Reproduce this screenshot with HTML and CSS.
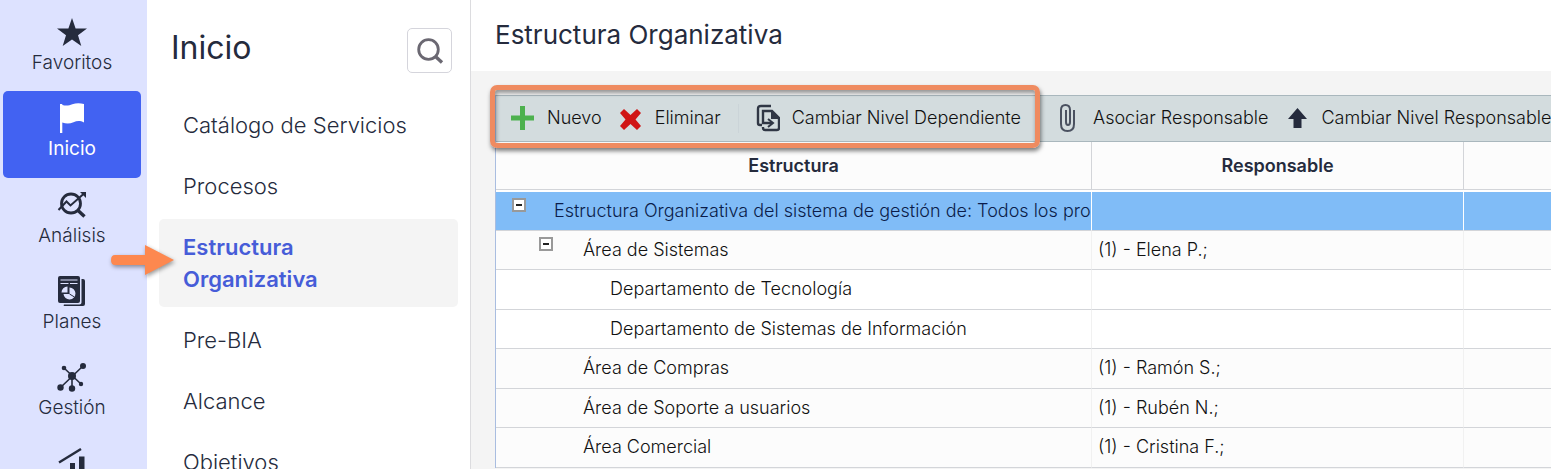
FILE: index.html
```html
<!DOCTYPE html>
<html lang="es">
<head>
  <meta charset="UTF-8">
  <meta name="viewport" content="width=device-width, initial-scale=1">
  <title>Estructura Organizativa</title>
  <link rel="stylesheet" href="styles.css">
</head>
<body>
  <div class="app">
    <nav class="rail">
      <a href="#" class="rail-item">
        <svg width="30" height="30" viewBox="0 0 30 30"><path fill="currentColor" d="M15 1l3.600 10.500H30l-9 6.700L24.300 29 15 22.500 5.700 29 9 18.200l-9-6.700h11.400z"/></svg>
        Favoritos
      </a>
      <a href="#" class="rail-item active">
        <svg width="30" height="30" viewBox="0 0 30 30"><path fill="currentColor" d="M3 1h2.300v1c4 1 7 .500 10-.7C19-.200 23-.200 27 1v18.500c-4-2.200-7-1.800-10.500-.3-4 1.700-7.500 1.500-11.200.3V30H3z"/></svg>
        Inicio
      </a>
      <a href="#" class="rail-item">
        <svg width="30" height="30" viewBox="0 0 30 30" fill="none" stroke="currentColor">
          <circle cx="14" cy="13.500" r="9.500" stroke-width="2.800"/>
          <path d="M1.500 20l8-8.500 4 4L26.500 4" stroke-width="2"/>
          <path d="M20.500 20l7 6.500" stroke-width="3.400"/>
          <path d="M23 2h6v6z" fill="currentColor" stroke="none"/>
        </svg>
        Análisis
      </a>
      <a href="#" class="rail-item">
        <svg width="30" height="30" viewBox="0 0 30 30">
          <path fill="currentColor" d="M3 0h18a2 2 0 0 1 2 2v23a2 2 0 0 1-2 2H3a2 2 0 0 1-2-2V2a2 2 0 0 1 2-2zM24.500 3H26a2 2 0 0 1 2 2v23a2 2 0 0 1-2 2H7a1 1 0 0 1 0-1.500h15.500a2 2 0 0 0 2-2z"/>
          <path stroke="#dde2ff" stroke-width="1.200" d="M3.500 4h17M3.500 7.500h8M13 7.500h7.500"/>
          <path fill="#dde2ff" d="M12.500 11.500a6 6 0 1 1-6 6.500h6zM10.500 10.500v6h-6a6 6 0 0 1 6-6z"/>
          <path fill="none" stroke="#252b3d" d="M12.500 18l5 3"/>
        </svg>
        Planes
      </a>
      <a href="#" class="rail-item">
        <svg width="30" height="30" viewBox="0 0 30 30" fill="currentColor">
          <path stroke="currentColor" stroke-width="1.600" d="M3 26L26 4M7 6l17 16M15 14v12"/>
          <circle cx="15" cy="14" r="4"/><circle cx="26" cy="4" r="3"/><circle cx="7" cy="6" r="2.300"/>
          <circle cx="3.500" cy="25.500" r="3.200"/><circle cx="15" cy="26.500" r="3.200"/><circle cx="24" cy="22" r="2.200"/>
        </svg>
        Gestión
      </a>
      <a href="#" class="rail-item" aria-label="Indicadores">
        <svg width="30" height="30" viewBox="0 0 30 30" fill="currentColor">
          <path stroke="currentColor" stroke-width="2.400" d="M2 14.500L24 1"/>
          <path d="M13 15h5v15h-5zM22 8.500h5.500V30H22zM4 22h5v8H4z"/>
        </svg>
      </a>
    </nav>

    <aside class="panel">
      <div class="panel-head">
        <h1>Inicio</h1>
        <button class="search" aria-label="Buscar">
          <svg width="28" height="28" viewBox="0 0 28 28" fill="none" stroke="currentColor" stroke-width="2.800"><circle cx="12.500" cy="12.500" r="9.800"/><path d="M19.500 19.500l6.500 6" stroke-width="3.400"/></svg>
        </button>
      </div>
      <nav class="menu">
        <a href="#">Catálogo de Servicios</a>
        <a href="#">Procesos</a>
        <a href="#" class="selected">
          Estructura<br>Organizativa
          <svg class="arrow" width="68" height="36" viewBox="0 0 68 36"><path fill="#fd884f" d="M6 12h30V2l29 15-29 15V22H6q-4 0-4-5t4-5z"/></svg>
        </a>
        <a href="#">Pre-BIA</a>
        <a href="#">Alcance</a>
        <a href="#">Objetivos</a>
      </nav>
    </aside>

    <main class="main">
      <header class="topbar"><h2>Estructura Organizativa</h2></header>
      <section class="grid">
        <div class="toolbar">
          <div class="tool-group">
            <button class="tool">
              <svg width="24" height="24" viewBox="0 0 24 24"><path fill="#4db14e" d="M9 0h5v9.500h9v5h-9V24H9v-9.500H0v-5h9z"/></svg>
              Nuevo
            </button>
            <button class="tool">
              <svg width="24" height="24" viewBox="0 0 24 24"><path fill="#d01515" d="M5 3l6.500 6L18 3l4 4-5.500 6.500L22 20l-4 4-6.500-6L5 24l-4-4 5.500-6.500L1 7z"/></svg>
              Eliminar
            </button>
            <span class="separator"></span>
            <button class="tool">
              <svg width="24" height="28" viewBox="0 0 24 28" fill="none" stroke="#303745" stroke-width="2.400">
                <path d="M15 2H5Q2 2 2 5v14q0 2 2 2h2"/>
                <path d="M7 13V7h9l7 7v10q0 2-2 2H9q-2 0-2-2v-1M7 12v7h9"/>
                <path d="M12 15l5 4-5 4" stroke-width="2"/>
                <path d="M15 6l9 9h-9z" fill="#303745" stroke="none"/>
              </svg>
              Cambiar Nivel Dependiente
            </button>
            <span class="callout"></span>
          </div>
          <button class="tool">
            <svg width="24" height="28" viewBox="0 0 24 28" fill="none" stroke="#4a5160" stroke-width="2"><path d="M17 6v14q0 7-6.500 7T4 20V6q0-5 4.500-5T13 6v12q0 3-2 3t-2-3V6M17 6v13"/></svg>
            Asociar Responsable
          </button>
          <button class="tool">
            <svg width="24" height="22" viewBox="0 0 24 22"><path fill="#252b3d" d="M12.500 1L22 12h-5.500v9h-8v-9H3z"/></svg>
            Cambiar Nivel Responsable
          </button>
        </div>
        <table>
          <colgroup><col class="col-name"><col class="col-resp"><col></colgroup>
          <thead>
            <tr><th>Estructura</th><th>Responsable</th><th></th></tr>
          </thead>
          <tbody>
            <tr class="current"><td class="level-0"><button class="toggle" aria-label="Contraer"></button>Estructura Organizativa del sistema de gestión de: Todos los pro</td><td></td><td></td></tr>
            <tr><td class="level-1"><button class="toggle" aria-label="Contraer"></button>Área de Sistemas</td><td>(1) - Elena P.;</td><td></td></tr>
            <tr class="leaf"><td class="level-2">Departamento de Tecnología</td><td></td><td></td></tr>
            <tr class="leaf"><td class="level-2">Departamento de Sistemas de Información</td><td></td><td></td></tr>
            <tr><td class="level-1">Área de Compras</td><td>(1) - Ramón S.;</td><td></td></tr>
            <tr><td class="level-1">Área de Soporte a usuarios</td><td>(1) - Rubén N.;</td><td></td></tr>
            <tr><td class="level-1">Área Comercial</td><td>(1) - Cristina F.;</td><td></td></tr>
          </tbody>
        </table>
      </section>
    </main>
  </div>
</body>
</html>
```
FILE: styles.css
```css
* {
  box-sizing: border-box;
}
body {
  margin: 0;
  font-family: Inter, "Open Sans", sans-serif;
  font-weight: 300;
  color: #252b3d;
  background: #fff;
}
a {
  color: inherit;
  text-decoration: none;
}
button {
  font: inherit;
  color: inherit;
  background: none;
  border: 0;
  padding: 0;
}
h1, h2 {
  margin: 0;
  font-weight: 400;
}
svg {
  flex: none;
}
.app {
  display: flex;
  height: 100vh;
  overflow: hidden;
}

/* barra de iconos */
.rail {
  flex: 0 0 147px;
  padding: 5px 6px 0 3px;
  background: #dde2ff;
}
.rail-item {
  display: flex;
  flex-direction: column;
  align-items: center;
  height: 86px;
  padding-top: 12px;
  border-radius: 5px;
  font-size: 19px;
  line-height: 32px;
}
.rail-item.active {
  height: 87px;
  color: #fff;
  background: #4262f2;
  font-weight: 400;
}

/* menu lateral */
.panel {
  flex: 0 0 324px;
  border-right: 1px solid #dcdcdf;
}
.panel-head {
  display: flex;
  justify-content: space-between;
  padding: 28px 18px 0 24px;
}
.panel-head h1 {
  font-size: 32px;
  line-height: 40px;
}
.search {
  display: flex;
  align-items: center;
  justify-content: center;
  width: 45px;
  height: 45px;
  border: 1px solid #d5d5dc;
  border-radius: 5px;
  color: #6b6872;
}
.menu {
  display: flex;
  flex-direction: column;
  gap: 5px;
  padding: 24px 12px 0;
}
.menu a {
  position: relative;
  padding: 12px 24px;
  border-radius: 5px;
  font-size: 22px;
  line-height: 32px;
}
.menu .selected {
  color: #465cd8;
  background: #f4f4f4;
  font-weight: 600;
}
.arrow {
  position: absolute;
  left: -50px;
  top: 24px;
  filter: drop-shadow(1px 2px 2px rgba(0, 0, 0, 0.4));
}

/* contenido */
.main {
  flex: 1;
  min-width: 0;
  background: #f4f4f4;
}
.topbar {
  padding: 18px 24px;
  background: #fff;
}
.topbar h2 {
  font-size: 26px;
  line-height: 34px;
  padding-bottom: 1px;
}
.grid {
  margin: 24px 0 0 24px;
  border-left: 1px solid #a9bde0;
  color: #111;
}
.toolbar {
  display: flex;
  height: 47px;
  padding-left: 15px;
  background: #d3dcde;
  border-top: 1px solid #a9b7bd;
  border-bottom: 1px solid #a9b7bd;
  font-size: 18px;
}
.tool-group {
  position: relative;
  display: flex;
  margin-right: 36px;
}
.tool {
  display: flex;
  align-items: center;
  gap: 12px;
  margin-right: 17px;
  padding-bottom: 2px;
  white-space: nowrap;
}
.tool:last-child,
.tool-group .tool:nth-last-child(2) {
  margin-right: 0;
}
.separator {
  width: 1px;
  margin: 8px 17px 8px 0;
  background: #cbd4d8;
}
.callout {
  position: absolute;
  inset: -11px -19px -7px -21px;
  border: 5px solid #ef8b60;
  border-radius: 7px;
  box-shadow: 1px 3px 4px rgba(0, 0, 0, 0.5), inset 1px 3px 4px rgba(0, 0, 0, 0.4);
  pointer-events: none;
}
table {
  width: 100%;
  table-layout: fixed;
  border-collapse: separate;
  border-spacing: 0;
  background: #fcfcfc;
  font-size: 18px;
}
.col-name {
  width: 596px;
}
.col-resp {
  width: 372px;
}
th {
  height: 48px;
  padding: 0;
  border-right: 1px solid #d3d5d9;
  border-bottom: 1px solid #d3d5d9;
  color: #252b3d;
  font-weight: 600;
}
td {
  position: relative;
  height: 39px;
  padding: 0 6px 2px;
  border-right: 1px solid #f1f1f1;
  border-bottom: 1px solid #d3d5d9;
  overflow: hidden;
  white-space: nowrap;
}
tr:nth-child(odd) td {
  height: 40px;
}
tbody .current td {
  height: 41px;
  padding-right: 0;
  border-top: 2px solid #fff;
  border-right-color: #fff;
  background: #80bcf7;
  background-clip: padding-box;
  color: #0b1c4a;
}
th:last-child,
td:last-child {
  border-right: 0;
}
.leaf {
  background: #fff;
}
.level-0 {
  padding-left: 58px;
}
.level-1 {
  padding-left: 87px;
}
.level-2 {
  padding-left: 114px;
}
.toggle {
  position: absolute;
  left: 16px;
  top: 6px;
  width: 14px;
  height: 14px;
  border: 2px solid #999;
  background: #fff linear-gradient(#222, #222) center / 6px 2px no-repeat;
}
.level-1 .toggle {
  left: 43px;
}
```
